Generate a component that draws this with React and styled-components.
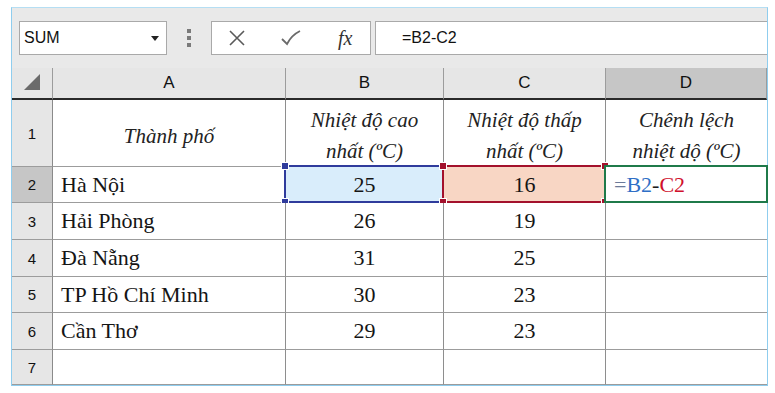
import React from 'react';
import styled, { createGlobalStyle } from 'styled-components';

const Global = createGlobalStyle`
  html, body { margin: 0; padding: 0; background: #ffffff; }
  body { width: 775px; height: 393px; overflow: hidden; font-family: "Liberation Serif", serif; }
`

const Frame = styled.div`
  margin: 7px 0 0 11px;
  width: 755px;
  border: 1px solid #8fcdee;
  border-top-color: #b5def3;
  background: #e9e9e9;
`

const Toolbar = styled.div`
  display: flex;
  align-items: center;
  height: 60px;
  padding: 0 0 0 7px;
  box-sizing: border-box;
`

const NameBox = styled.div`
  display: flex;
  align-items: center;
  justify-content: space-between;
  width: 148px;
  height: 34px;
  box-sizing: border-box;
  background: #fff;
  border: 1px solid #a9a9a9;
  padding: 0 7px 0 4px;
  font-family: "Liberation Sans", Arial, sans-serif;
  font-size: 16px;
  color: #111;
`

const Caret = styled.span`
  width: 0;
  height: 0;
  border-left: 4px solid transparent;
  border-right: 4px solid transparent;
  border-top: 5px solid #222;
`

const Grip = styled.div`
  display: flex;
  flex-direction: column;
  gap: 3px;
  margin: 0 20px 0 20px;
  span {
    width: 4px;
    height: 4px;
    background: #7a7a7a;
  }
`

const Buttons = styled.div`
  display: flex;
  align-items: center;
  width: 160px;
  height: 34px;
  box-sizing: border-box;
  background: #fff;
  border: 1px solid #a9a9a9;
  padding: 0 0 0 16px;
  gap: 34px;
`

const Fx = styled.span`
  font-family: "Liberation Serif", serif;
  font-style: italic;
  font-size: 20px;
  color: #333;
  margin-left: 2px;
`

const Formula = styled.div`
  display: flex;
  align-items: center;
  margin-left: 4px;
  flex: 1;
  height: 34px;
  box-sizing: border-box;
  background: #fff;
  border: 1px solid #a9a9a9;
  border-right: none;
  padding-left: 26px;
  font-family: "Liberation Sans", Arial, sans-serif;
  font-size: 16px;
  color: #111;
`

const Sheet = styled.div`
  display: grid;
  grid-template-columns: 41px 233px 158px 162px 161px;
  grid-template-rows: 32px 67px 36px 37px 37px 36px 37px 35px;
  background: #fff;
  font-family: "Liberation Serif", serif;
`

const ColHead = styled.div`
  display: flex;
  align-items: center;
  justify-content: center;
  background: ${p => (p.$active ? '#c6c6c6' : '#e6e6e6')};
  border-right: 1px solid #9c9c9c;
  border-bottom: 2px solid #2a2a2a;
  font-family: "Liberation Sans", Arial, sans-serif;
  font-size: 17px;
  color: #111;
  &:last-child { border-right: none; }
`

const RowHead = styled.div`
  display: flex;
  align-items: center;
  justify-content: center;
  background: ${p => (p.$active ? '#c6c6c6' : '#e6e6e6')};
  border-right: 1px solid #8a8a8a;
  border-bottom: 1px solid #9c9c9c;
  font-family: "Liberation Sans", Arial, sans-serif;
  font-size: 15px;
  color: #111;
`

const Cell = styled.div`
  position: relative;
  display: flex;
  align-items: center;
  justify-content: ${p => (p.$left ? 'flex-start' : 'center')};
  padding-left: ${p => (p.$left ? '8px' : '0')};
  background: ${p => p.$fill || '#fff'};
  border-right: 1px solid #8e8e8e;
  border-bottom: 1px solid #9c9c9c;
  font-family: "Liberation Serif", serif;
  font-size: 22px;
  color: #151515;
  &:nth-child(5n) { border-right: none; }
`

const HeadCell = styled(Cell)`
  padding-top: 6px;
  font-style: italic;
  font-size: 21px;
  line-height: 31px;
  text-align: center;
  color: #222;
`

const Select = styled.div`
  position: absolute;
  left: -2px;
  top: -2px;
  right: -1px;
  bottom: -1px;
  border: 2px solid ${p => p.$color};
  pointer-events: none;
`

const Handle = styled.span`
  position: absolute;
  width: 6px;
  height: 6px;
  background: ${p => p.$color};
  border: 1px solid #fff;
  ${p => (p.$top ? 'top: -5px;' : 'bottom: -5px;')}
  ${p => (p.$right ? 'right: -5px;' : 'left: -5px;')}
`

const Ref = styled.span`
  color: ${p => p.$color};
`

const HANDLES = [
  { $top: true }, { $top: true, $right: true }, {}, { $right: true },
];

const Selection = ({ color, handles = true }) => (
  <Select $color={color}>
    {handles && HANDLES.map((h, i) => <Handle key={i} $color={color} {...h} />)}
  </Select>
);

const rows = [
  ['Hà Nội', '25', '16'],
  ['Hải Phòng', '26', '19'],
  ['Đà Nẵng', '31', '25'],
  ['TP Hồ Chí Minh', '30', '23'],
  ['Cần Thơ', '29', '23'],
];

const App = () => (
  <>
    <Global />
    <Frame>
      <Toolbar>
        <NameBox>SUM<Caret /></NameBox>
        <Grip><span /><span /><span /></Grip>
        <Buttons>
          <svg width="18" height="18" viewBox="0 0 18 18">
            <path d="M2 2 L16 16 M16 2 L2 16" stroke="#5a5a5a" strokeWidth="1.6" fill="none" />
          </svg>
          <svg width="22" height="20" viewBox="0 0 22 20">
            <path d="M2 11 L7 16 C10 10 14 6 20 3" stroke="#6a6a6a" strokeWidth="1.8" fill="none" />
          </svg>
          <Fx>fx</Fx>
        </Buttons>
        <Formula>=B2-C2</Formula>
      </Toolbar>
      <Sheet>
        <ColHead>
          <svg width="18" height="18" viewBox="0 0 18 18">
            <path d="M1 16 L17 0 L17 16 Z" fill="#6b6b6b" />
          </svg>
        </ColHead>
        <ColHead>A</ColHead>
        <ColHead>B</ColHead>
        <ColHead>C</ColHead>
        <ColHead $active>D</ColHead>

        <RowHead>1</RowHead>
        <HeadCell>Thành phố</HeadCell>
        <HeadCell>Nhiệt độ cao<br />nhất (ºC)</HeadCell>
        <HeadCell>Nhiệt độ thấp<br />nhất (ºC)</HeadCell>
        <HeadCell>Chênh lệch<br />nhiệt dộ (ºC)</HeadCell>

        {rows.map((r, i) => (
          <React.Fragment key={r[0]}>
            <RowHead $active={i === 0}>{i + 2}</RowHead>
            <Cell $left>{r[0]}</Cell>
            <Cell $fill={i === 0 ? '#d9edfb' : undefined}>
              {r[1]}
              {i === 0 && <Selection color="#2f3b9c" />}
            </Cell>
            <Cell $fill={i === 0 ? '#f8d6c4' : undefined}>
              {r[2]}
              {i === 0 && <Selection color="#a3112c" />}
            </Cell>
            <Cell $left>
              {i === 0 && (
                <>
                  <Ref $color="#6b7a99">=</Ref>
                  <Ref $color="#2f6fc6">B2</Ref>
                  <Ref $color="#1d1d1d">-</Ref>
                  <Ref $color="#d0102c">C2</Ref>
                  <Selection color="#1f7a4a" handles={false} />
                </>
              )}
            </Cell>
          </React.Fragment>
        ))}

        <RowHead>7</RowHead>
        <Cell />
        <Cell />
        <Cell />
        <Cell />
      </Sheet>
    </Frame>
  </>
);

export default App;
